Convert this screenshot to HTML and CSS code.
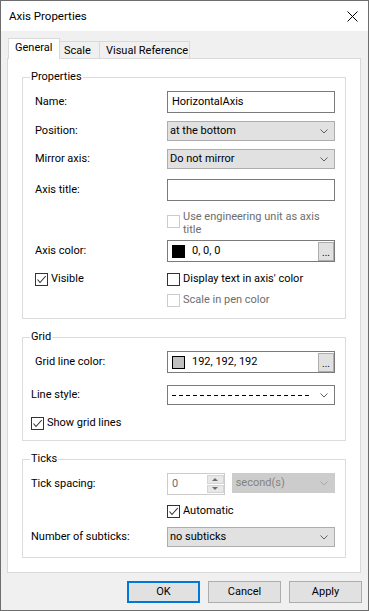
FILE: index.html
```html
<!DOCTYPE html>
<html lang="en">
<head>
  <meta charset="UTF-8">
  <title>Axis Properties</title>
  <link rel="stylesheet" href="styles.css">
</head>
<body>
  <div class="window">
    <div class="titlebar">
      <span class="title">Axis Properties</span>
      <svg class="close" width="11" height="11" viewBox="0 0 11 11">
        <path d="M0.5 0.5 L10.5 10.5 M10.5 0.5 L0.5 10.5" stroke="#000" stroke-width="1" fill="none"/>
      </svg>
    </div>

    <div class="client">
      <div class="tabs">
        <div class="tab active">General</div>
        <div class="tab tab-scale">Scale</div>
        <div class="tab tab-visual">Visual Reference</div>
      </div>

      <div class="panel">
        <fieldset class="group">
          <legend>Properties</legend>
          <div class="rows rows-props">
            <div class="row h22">
              <span class="lbl">Name:</span>
              <div class="edit">HorizontalAxis</div>
            </div>
            <div class="row h20 mt8">
              <span class="lbl">Position:</span>
              <div class="combo"><span>at the bottom</span><svg class="chev" width="8" height="5" viewBox="0 0 8 5"><polyline points="0.5,0.5 4,4 7.5,0.5" fill="none" stroke="#606060"/></svg></div>
            </div>
            <div class="row h20 mt8">
              <span class="lbl">Mirror axis:</span>
              <div class="combo"><span>Do not mirror</span><svg class="chev" width="8" height="5" viewBox="0 0 8 5"><polyline points="0.5,0.5 4,4 7.5,0.5" fill="none" stroke="#606060"/></svg></div>
            </div>
            <div class="row h22 mt10">
              <span class="lbl">Axis title:</span>
              <div class="edit"></div>
            </div>
            <div class="row row-eng mt9">
              <span class="lbl"></span>
              <div class="check disabled multi">
                <span class="cb"></span>
                <span>Use engineering unit as axis<br>title</span>
              </div>
            </div>
            <div class="row h22 mt4">
              <span class="lbl">Axis color:</span>
              <div class="edit colorbox">
                <span class="sw sw-black"></span>
                <span>0, 0, 0</span>
                <span class="dots">...</span>
              </div>
            </div>
            <div class="row h14 mt10">
              <div class="lbl check">
                <span class="cb"><svg width="11" height="11" viewBox="0 0 11 11"><polyline points="1.5,5.5 4,8.5 9.8,2" fill="none" stroke="#333" stroke-width="1.1"/></svg></span>
                <span>Visible</span>
              </div>
              <div class="check">
                <span class="cb"></span>
                <span>Display text in axis' color</span>
              </div>
            </div>
            <div class="row h14 mt7">
              <span class="lbl"></span>
              <div class="check disabled">
                <span class="cb"></span>
                <span>Scale in pen color</span>
              </div>
            </div>
          </div>
        </fieldset>

        <fieldset class="group">
          <legend>Grid</legend>
          <div class="rows rows-narrow rows-grid">
            <div class="row h22">
              <span class="lbl"><span class="indent">Grid line color:</span></span>
              <div class="edit colorbox">
                <span class="sw sw-silver"></span>
                <span>192, 192, 192</span>
                <span class="dots">...</span>
              </div>
            </div>
            <div class="row h20 mt12">
              <span class="lbl">Line style:</span>
              <div class="combo combo-white">
                <span class="dash"></span>
                <svg class="chev" width="8" height="5" viewBox="0 0 8 5"><polyline points="0.5,0.5 4,4 7.5,0.5" fill="none" stroke="#606060"/></svg>
              </div>
            </div>
            <div class="row h14 mt11">
              <div class="lbl check">
                <span class="cb"><svg width="11" height="11" viewBox="0 0 11 11"><polyline points="1.5,5.5 4,8.5 9.8,2" fill="none" stroke="#333" stroke-width="1.1"/></svg></span>
                <span>Show grid lines</span>
              </div>
            </div>
          </div>
        </fieldset>

        <fieldset class="group">
          <legend>Ticks</legend>
          <div class="rows rows-narrow">
            <div class="row h22">
              <span class="lbl">Tick spacing:</span>
              <div class="spin">
                <span class="spin-val">0</span>
                <span class="spin-btns">
                  <span class="spin-btn"><span class="tri-up"></span></span>
                  <span class="spin-btn"><span class="tri-down"></span></span>
                </span>
              </div>
              <div class="combo combo-off"><span>second(s)</span><svg class="chev" width="8" height="5" viewBox="0 0 8 5"><polyline points="0.5,0.5 4,4 7.5,0.5" fill="none" stroke="#a8a8a8"/></svg></div>
            </div>
            <div class="row h14 mt9">
              <span class="lbl"></span>
              <div class="check">
                <span class="cb"><svg width="11" height="11" viewBox="0 0 11 11"><polyline points="1.5,5.5 4,8.5 9.8,2" fill="none" stroke="#333" stroke-width="1.1"/></svg></span>
                <span>Automatic</span>
              </div>
            </div>
            <div class="row h20 mt9">
              <span class="lbl">Number of subticks:</span>
              <div class="combo"><span>no subticks</span><svg class="chev" width="8" height="5" viewBox="0 0 8 5"><polyline points="0.5,0.5 4,4 7.5,0.5" fill="none" stroke="#606060"/></svg></div>
            </div>
          </div>
        </fieldset>
      </div>

      <div class="buttons">
        <div class="btn default">OK</div>
        <div class="btn">Cancel</div>
        <div class="btn">Apply</div>
      </div>
    </div>
  </div>
</body>
</html>
```

FILE: styles.css
```css
body {
  margin: 0;
  font-family: Roboto, "Noto Sans", sans-serif;
  font-size: 11px;
  line-height: 14px;
  color: #000;
}
.window {
  box-sizing: border-box;
  width: 369px;
  height: 611px;
  border: 1px solid #6d6d6d;
  background: #f0f0f0;
  display: flex;
  flex-direction: column;
}
/* Title bar */
.titlebar {
  height: 30px;
  flex: none;
  background: #fff;
  display: flex;
  align-items: center;
  justify-content: space-between;
  padding: 0 10px 0 8px;
}
.title {
  font-size: 11.5px;
}
.close {
  display: block;
  margin-top: 1px;
}
/* Client area */
.client {
  flex: 1;
  padding: 7px 7px 0 6px;
  display: flex;
  flex-direction: column;
}
.tabs {
  display: flex;
  align-items: flex-end;
  height: 20px;
  padding-left: 1px;
  position: relative;
  z-index: 1;
}
.tab {
  box-sizing: border-box;
  height: 17px;
  border: 1px solid #d9d9d9;
  border-left: 0;
  border-bottom: 0;
  background: #f0f0f0;
  padding-left: 6px;
  line-height: 17px;
}
.tab.active {
  width: 52px;
  height: 21px;
  margin-bottom: -1px;
  border-left: 1px solid #d9d9d9;
  background: #fff;
  line-height: 18px;
}
.tab-scale {
  width: 40px;
  padding-left: 4px;
}
.tab-visual {
  width: 90px;
}
.panel {
  background: #fff;
  border: 1px solid #d9d9d9;
  padding: 10px 14px 14px;
}
/* Group boxes */
.group {
  margin: 0;
  padding: 0;
  min-width: 0;
  border: 1px solid #dcdcdc;
}
.group + .group {
  margin-top: 10px;
}
.group legend {
  margin-left: 7px;
  padding: 0 1px;
  line-height: 16px;
}
.rows-props {
  padding: 6px 10px 11px 12px;
}
.rows-narrow {
  padding: 6px 10px 10px 8px;
}
.row {
  display: flex;
  align-items: center;
}
.h22 { height: 22px; }
.h20 { height: 20px; }
.h14 { height: 14px; }
.mt4 { margin-top: 4px; }
.mt7 { margin-top: 7px; }
.mt8 { margin-top: 8px; }
.mt9 { margin-top: 9px; }
.mt10 { margin-top: 10px; }
.mt11 { margin-top: 11px; }
.mt12 { margin-top: 12px; }
.lbl {
  width: 132px;
  flex: none;
}
.rows-narrow .lbl {
  width: 136px;
}
.indent {
  margin-left: 4px;
}
/* Inputs */
.edit {
  box-sizing: border-box;
  width: 168px;
  height: 22px;
  border: 1px solid #7a7a7a;
  background: #fff;
  padding-left: 4px;
  display: flex;
  align-items: center;
}
.combo {
  box-sizing: border-box;
  width: 168px;
  height: 20px;
  border: 1px solid #adadad;
  background: #e1e1e1;
  padding: 0 6px 0 2px;
  display: flex;
  align-items: center;
  justify-content: space-between;
}
.combo-white {
  background: #fff;
  border-color: #7a7a7a;
  padding-left: 4px;
}
.combo-off {
  width: 104px;
  margin-left: 7px;
  align-self: flex-start;
  background: #cccccc;
  border-color: #cccccc;
  color: #838383;
  padding-left: 3px;
}
.chev {
  display: block;
  flex: none;
}
.dash {
  flex: 1;
  height: 1px;
  margin-right: 10px;
  background: repeating-linear-gradient(to right, #000 0 4px, transparent 4px 7px);
}
.colorbox {
  padding-left: 4px;
}
.sw {
  box-sizing: border-box;
  width: 13px;
  height: 13px;
  border: 1px solid #000;
  margin-right: 7px;
  flex: none;
}
.sw-black {
  background: #000;
}
.sw-silver {
  background: #c0c0c0;
}
.dots {
  box-sizing: border-box;
  width: 16px;
  height: 19px;
  margin-left: auto;
  align-self: flex-end;
  border: 1px solid #adadad;
  background: #e1e1e1;
  font-size: 10px;
  line-height: 19px;
  text-align: center;
}
/* Checkboxes */
.check {
  display: flex;
  align-items: center;
  gap: 3px;
}
.cb {
  box-sizing: border-box;
  width: 13px;
  height: 13px;
  border: 1px solid #333;
  background: #fff;
  flex: none;
}
.cb svg {
  display: block;
}
.check.disabled {
  color: #6d6d6d;
}
.check.disabled .cb {
  border-color: #cccccc;
}
.row-eng {
  height: 26px;
  align-items: flex-start;
}
.check.multi {
  align-items: flex-start;
  line-height: 13px;
}
.check.multi .cb {
  margin-top: 5px;
}
/* Spin box */
.spin {
  box-sizing: border-box;
  width: 58px;
  height: 22px;
  border: 1px solid #cccccc;
  background: #fff;
  display: flex;
}
.spin-val {
  flex: 1;
  padding-left: 4px;
  color: #6d6d6d;
  display: flex;
  align-items: center;
}
.spin-btns {
  width: 17px;
  display: flex;
  flex-direction: column;
  gap: 1px;
  padding: 1px 0;
}
.spin-btn {
  flex: 1;
  background: #e8e8e8;
  border: 1px solid #d4d4d4;
  display: flex;
  align-items: center;
  justify-content: center;
}
.tri-up {
  border-left: 3px solid transparent;
  border-right: 3px solid transparent;
  border-bottom: 3px solid #6d6d6d;
}
.tri-down {
  border-left: 3px solid transparent;
  border-right: 3px solid transparent;
  border-top: 3px solid #6d6d6d;
}
/* Dialog buttons */
.buttons {
  display: flex;
  justify-content: flex-end;
  gap: 8px;
  margin-top: 8px;
  margin-right: -1px;
}
.btn {
  box-sizing: border-box;
  width: 73px;
  height: 22px;
  border: 1px solid #adadad;
  background: #e1e1e1;
  display: flex;
  align-items: center;
  justify-content: center;
}
.btn.default {
  border: 2px solid #0078d7;
}
```
